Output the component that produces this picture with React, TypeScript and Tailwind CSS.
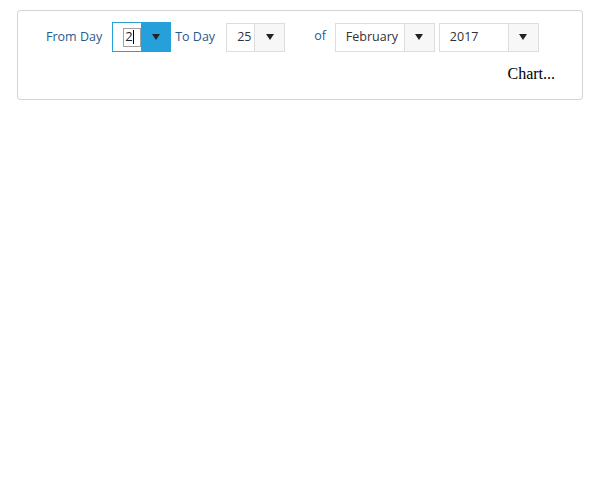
import React from 'react'

const font = { fontFamily: '"Open Sans", "Noto Sans", sans-serif' }

function Caret() {
  return (
    <svg width="8" height="6" viewBox="0 0 8 6" className="block">
      <path d="M0 0 H8 L4 6 Z" fill="#222" />
    </svg>
  )
}

function Combo({ value, width, btn = 30 }: { value: string; width: number; btn?: number }) {
  return (
    <div
      className="flex h-[29px] border border-[#dddddd] bg-white"
      style={{ width }}
    >
      <div className="flex-1 flex items-center pl-[10px] text-[12.5px] text-[#333]">{value}</div>
      <div
        className="flex items-center justify-center border-l border-[#dddddd] bg-[#f7f7f7]"
        style={{ width: btn }}
      >
        <Caret />
      </div>
    </div>
  )
}

export default function App() {
  return (
    <div className="min-h-[496px] bg-white pt-[10px] pl-[17px] pr-[16px]" style={font}>
      <div className="h-[90px] rounded-[3px] border border-[#d4d4d4] pt-[11px]">
        <div className="flex items-center">
          <span className="ml-[28px] text-[12.5px] text-[#275a8c]">From Day</span>
          {/* focused day picker */}
          <div className="ml-[10px] flex h-[30px] w-[59px] border border-[#26a0da]">
            <div className="flex w-[28px] items-center justify-end bg-white">
              <div className="flex h-[19px] w-[18px] items-center border border-[#a0a0a0] pl-[1px] text-[13px] text-[#222]">
                2<span className="h-[14px] w-px bg-black" />
              </div>
            </div>
            <div className="flex flex-1 items-center justify-center bg-[#26a0da]">
              <Caret />
            </div>
          </div>
          <span className="ml-[4px] text-[12.5px] text-[#275a8c]">To Day</span>
          <div className="ml-[11px]">
            <Combo value="25" width={59} />
          </div>
          <span className="ml-[29px] -mt-[2px] text-[12.5px] text-[#275a8c]">of</span>
          <div className="ml-[9px]">
            <Combo value="February" width={100} />
          </div>
          <div className="ml-[4px]">
            <Combo value="2017" width={100} />
          </div>
        </div>
        <div className="mt-[10px] flex justify-end pr-[27px]">
          <span className="text-[16px] text-black" style={{ fontFamily: '"Liberation Serif", serif' }}>
            Chart...
          </span>
        </div>
      </div>
    </div>
  )
}
